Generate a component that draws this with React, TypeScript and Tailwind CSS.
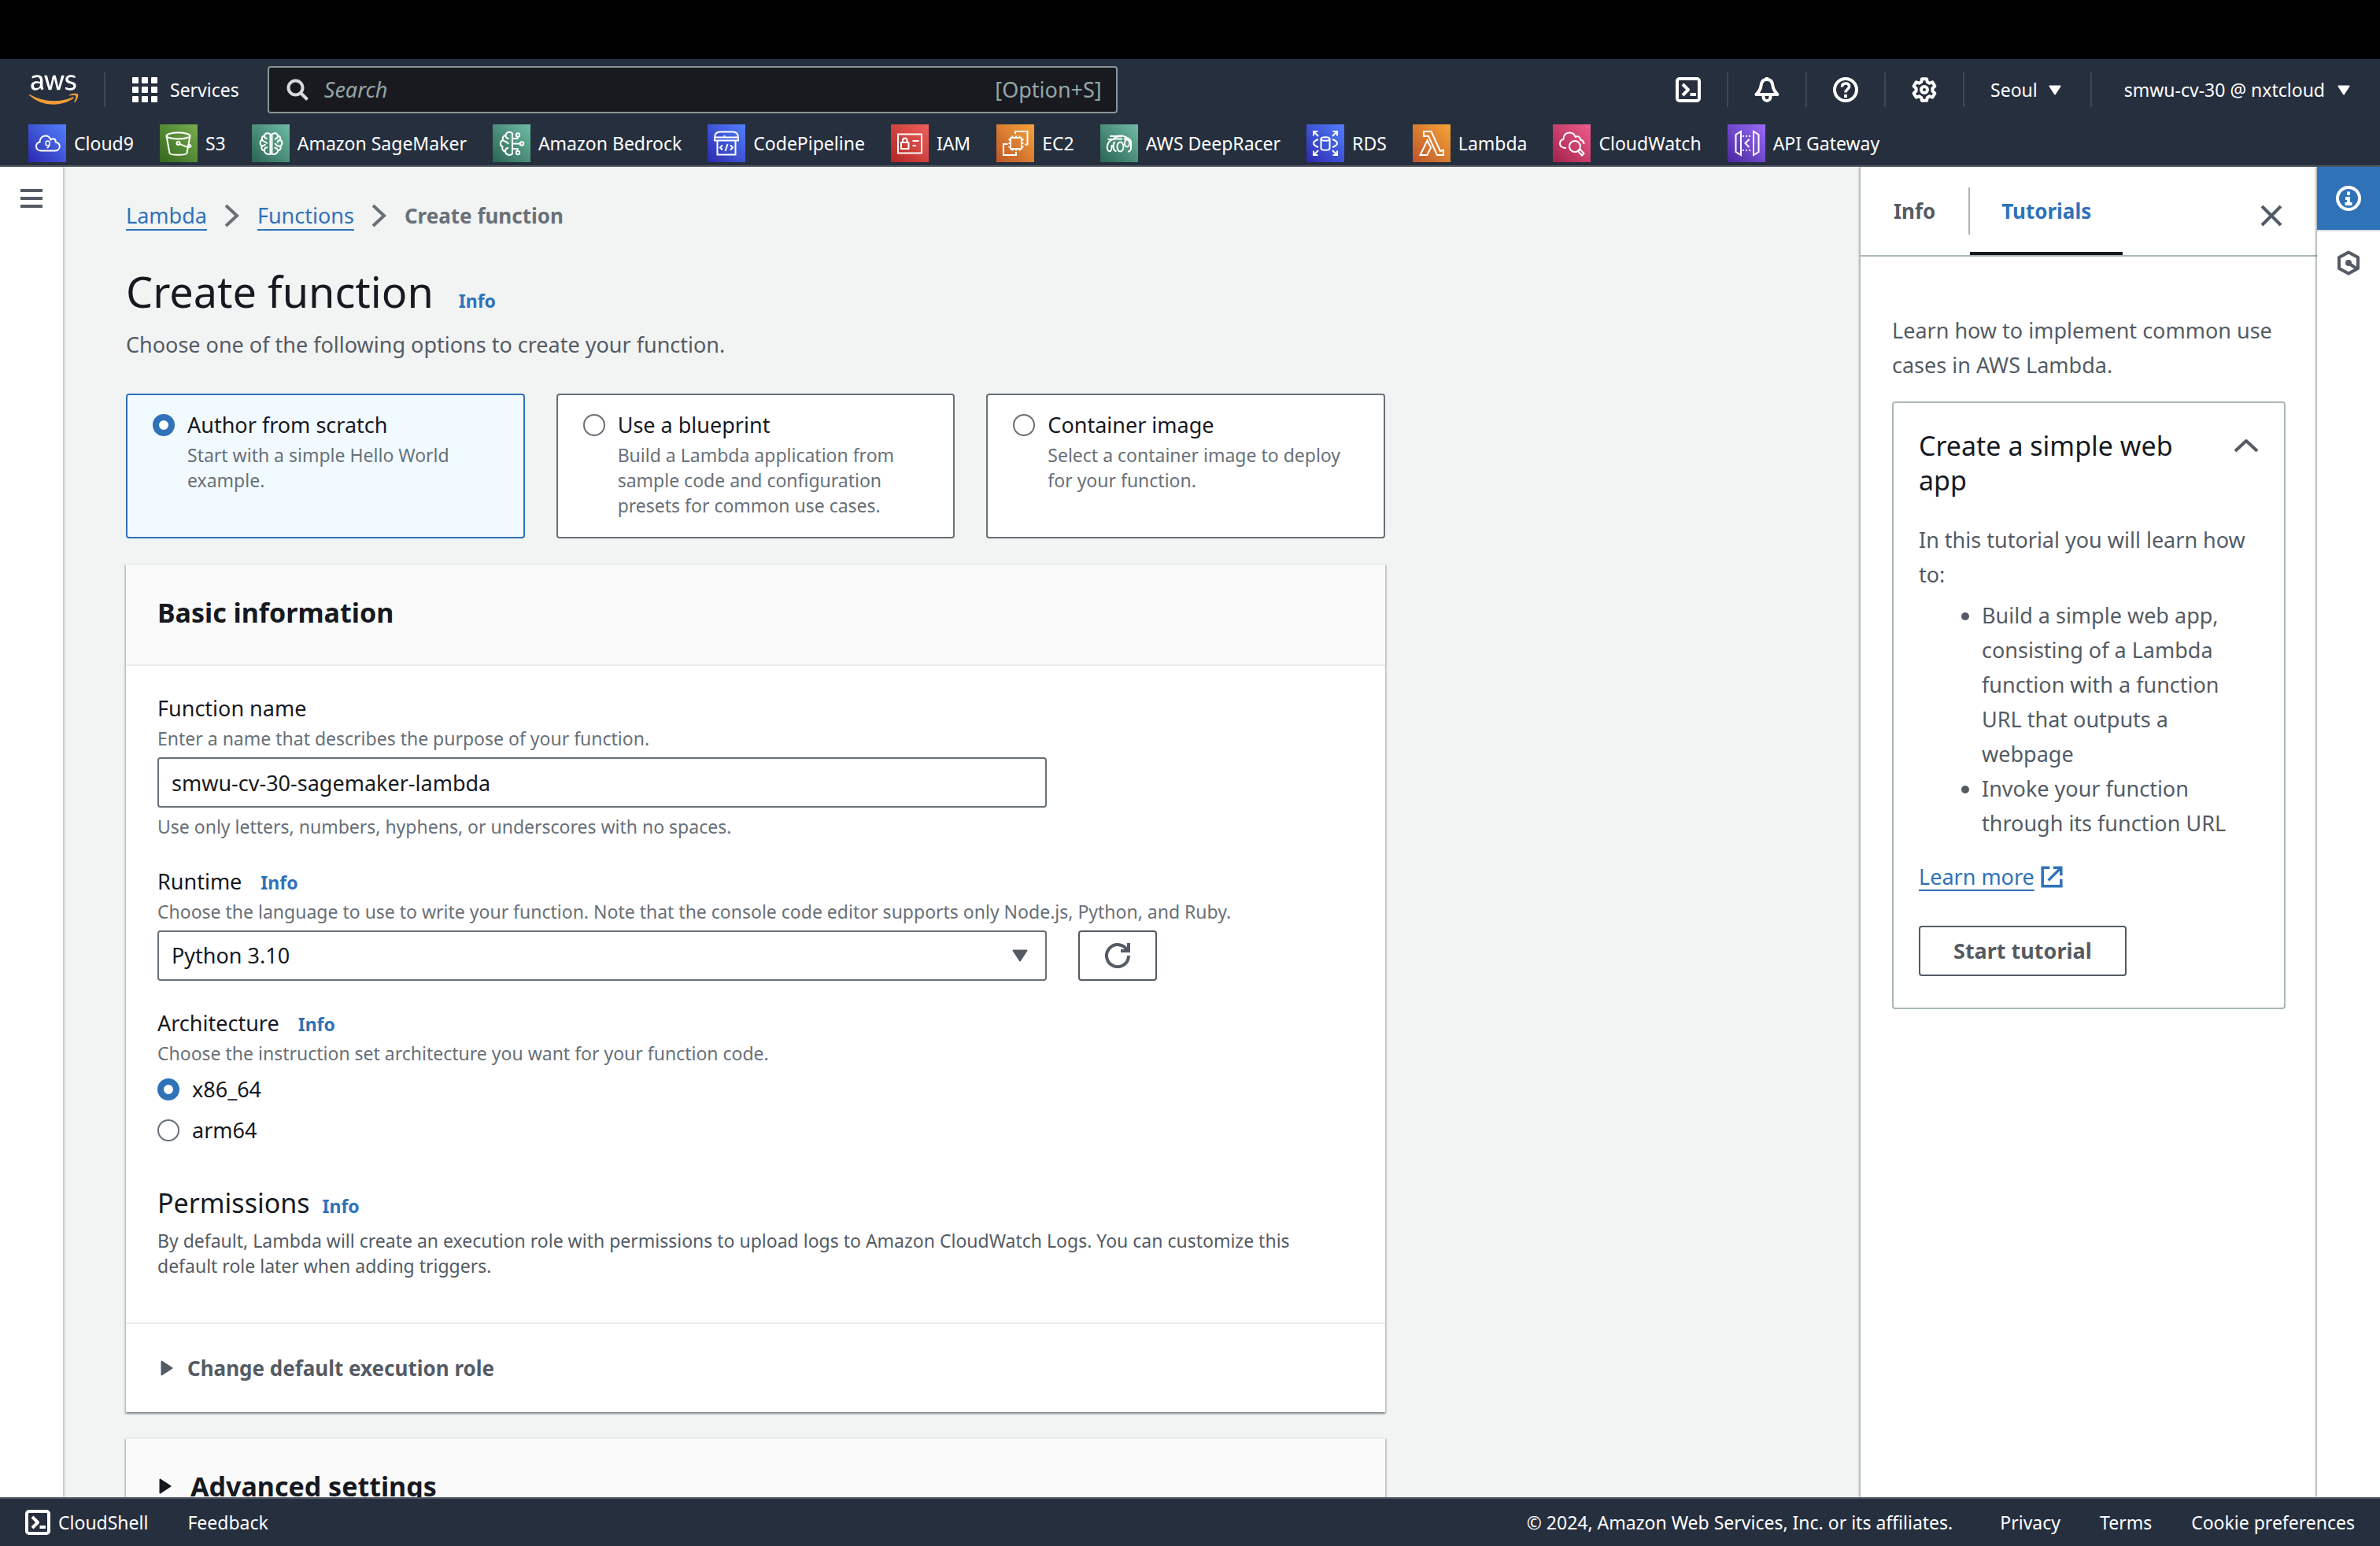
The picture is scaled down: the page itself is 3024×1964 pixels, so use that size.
import type { ReactNode } from "react";
import { FaAws } from "react-icons/fa";

type IconProps = { className?: string; children: ReactNode };

function Icon({ className = "size-8", children }: IconProps) {
  return (
    <svg
      viewBox="0 0 32 32"
      aria-hidden="true"
      fill="none"
      stroke="currentColor"
      strokeWidth={4}
      className={`shrink-0 ${className}`}
    >
      {children}
    </svg>
  );
}

const TerminalIcon = () => (
  <Icon>
    <rect x="2" y="2" width="28" height="28" rx="3" />
    <path d="M9 9l7 7-7 7" strokeLinejoin="round" />
    <path d="M18.5 22H26" strokeLinecap="butt" />
  </Icon>
);

const BellIcon = () => (
  <Icon>
    <path
      d="M16 3c-4.4 0-7 3-7.4 7.500C8.200 15 6.500 18 2.500 22h27c-4-4-5.700-7-6.100-11.500C23 6 20.400 3 16 3z"
      strokeLinejoin="round"
    />
    <path d="M16 0v4" />
    <path d="M11.500 22v3a4.500 5 0 0 0 9 0v-3" />
  </Icon>
);

const HelpIcon = () => (
  <Icon>
    <circle cx="16" cy="16" r="14" />
    <path d="M11.500 12.500C11.500 9.500 13.300 8 16 8s4.600 1.500 4.600 4.100c0 3.400-4.600 3.300-4.600 7.400" strokeWidth={3.600} />
    <path d="M16 22v4" />
  </Icon>
);

const GearIcon = () => (
  <Icon>
    <path
      d="M13 2.200h6l.8 3.900 2.800 1.600 3.800-1.300 3 5.200-3 2.600v3.600l3 2.600-3 5.200-3.800-1.300-2.800 1.600-.8 3.900h-6l-.8-3.900-2.800-1.600-3.800 1.300-3-5.200 3-2.600v-3.600l-3-2.600 3-5.200 3.800 1.300 2.800-1.600z"
      strokeLinejoin="round"
    />
    <circle cx="16" cy="16" r="4" />
  </Icon>
);

const CaretDown = ({ className = "" }: { className?: string }) => (
  <svg
    viewBox="0 0 20 16"
    aria-hidden="true"
    fill="currentColor"
    stroke="currentColor"
    strokeWidth={2}
    strokeLinejoin="round"
    className={`shrink-0 ${className}`}
  >
    <path d="M1.500 1.500h17L10 14.500z" />
  </svg>
);

const CaretRight = () => (
  <svg
    viewBox="0 0 16 20"
    aria-hidden="true"
    fill="currentColor"
    stroke="currentColor"
    strokeWidth={2}
    strokeLinejoin="round"
    className="h-5 w-4 shrink-0"
  >
    <path d="M1.500 1.500v17L14.500 10z" />
  </svg>
);

const Divider = () => <span className="h-11 w-0.5 shrink-0 bg-[#414750]" />;

const services: { name: string; tile: string; art: ReactNode }[] = [
  {
    name: "Cloud9",
    tile: "from-[#2e27ad] to-[#527fff]",
    art: (
      <>
        <path d="M16 33.500c-3.500 0-6-2.500-6-5.500s2-5 4.600-5.500c-.3-4.500 3-8 7-8 3.300 0 5.800 2 6.900 5 1-1 2-1.400 3.200-1.200 2 .3 3.200 2 3.100 4.200 3.200.8 5 2.900 5 5.600 0 3-2.500 5.400-6 5.400z" />
        <path d="M27 24a2.500 3 0 1 1-5 0a2.500 3 0 1 1 5 0c0 3-1.500 5.500-3.500 6" strokeWidth={1.500} />
      </>
    ),
  },
  {
    name: "S3",
    tile: "from-[#33681d] to-[#78ae4e]",
    art: (
      <>
        <ellipse cx="23.500" cy="14.500" rx="15" ry="4" />
        <path d="M8.500 14.500l4 22c1 3 21 3 22 0l4-22" />
        <circle cx="23.500" cy="24" r="2" />
        <path d="M25 24.500c7 4 13.500 5.500 14.500 3.500.3-1-1-2-3.500-3" />
      </>
    ),
  },
  {
    name: "Amazon SageMaker",
    tile: "from-[#2b6553] to-[#6fbda5]",
    art: (
      <>
        <path d="M23.500 12.500c-2.500-2.300-7-1.600-7.500 2-3 .3-3.800 2.800-2.800 5-3.200 1.500-3.600 6.300-.4 8-1.400 3 .3 5.500 3 5.800.3 3.500 3.800 5.500 7.700 4.500z" />
        <path d="M25.500 12.500c2.500-2.300 7-1.600 7.500 2 3 .3 3.800 2.800 2.800 5 3.200 1.500 3.600 6.300.4 8 1.400 3-.3 5.500-3 5.800-.3 3.500-3.800 5.500-7.700 4.500z" />
        <path d="M16 14.500c0 2 1.500 3.500 3.500 3.500M13 20c2 2.500 5.500 2 6.500 4.500M12.800 27.500c2.200 0 3.700-1 4.200-2.500M16 33.300c0-2.300 1.500-4 4-4M33 14.500c0 2.500-1.500 4-4 4M36 20c-2 .2-3.500 1.500-3.500 3.500M36 27.500c-3 .5-6-1-6.500-3.500M33 33.300c-.5-2.300-2-3.800-4.500-3.300" />
      </>
    ),
  },
  {
    name: "Amazon Bedrock",
    tile: "from-[#2b6553] to-[#6fbda5]",
    art: (
      <>
        <path d="M25 11.500c-3-3-8-2-8.500 2.500-3.500.3-4.500 3.500-3.300 6-4.200 1.500-4.500 6.500-.7 8.500-1 3.500.8 5.500 3.500 6 .7 4.500 6 5.500 9 3z" />
        <path d="M16.500 14c0 2.500 1.500 4 4 4M13 20c3 2.500 6 2 7 5M16 34.500c0-2.500 1.500-4.500 4-4.500" />
        <path d="M25 18h6.500v-2.500M25 24.500h9.500M25 31h6.500v2.500" />
        <circle cx="32" cy="13.500" r="2.200" />
        <circle cx="37" cy="24.500" r="2.200" />
        <circle cx="32" cy="36" r="2.200" />
      </>
    ),
  },
  {
    name: "CodePipeline",
    tile: "from-[#2e27ad] to-[#527fff]",
    art: (
      <>
        <path d="M9 17c0-5 3-7.500 7-7.500h16c4 0 7 2.500 7 7.500v3.500H9zM9 16.500h30M12.500 20.500v18h23v-18M17 16.500v1M21.500 14v2.500" />
        <path d="M19 26.500l-3 3 3 3M29 26.500l3 3-3 3M25.500 25l-3 9" />
      </>
    ),
  },
  {
    name: "IAM",
    tile: "from-[#b12423] to-[#f0605b]",
    art: (
      <>
        <rect x="9" y="12.500" width="30" height="24" />
        <rect x="13" y="23" width="9.500" height="8" />
        <path d="M15 23v-2.500c0-4 5.500-4 5.500 0V23M27.500 21h8M27.500 27h4.500" />
      </>
    ),
  },
  {
    name: "EC2",
    tile: "from-[#bd572a] to-[#f5a336]",
    art: (
      <>
        <rect x="18" y="17" width="14" height="14" />
        <path d="M20.500 14.500V17M25 14.500V17M29.500 14.500V17M20.500 31v2.500M25 31v2.500M29.500 31v2.500M15.500 19.500H18M15.500 24H18M15.500 28.500H18M32 19.500h2.500M32 24h2.500M32 28.500h2.500" />
        <path d="M24 12V9h15.500v16.500H36M14.500 25H9v14h16v-4" />
      </>
    ),
  },
  {
    name: "AWS DeepRacer",
    tile: "from-[#2b6553] to-[#6fbda5]",
    art: (
      <>
        <path d="M12 15h8c7-1.500 13 0 18 5M9.500 19h7c2.500-3 6-4 9.500-3.500M9 27c1-5 5-8 10-8.500h9M30 19c3-2.500 8-1.500 9 3v8c0 3-2 5-4 4.500" />
        <ellipse cx="25.500" cy="28.500" rx="4" ry="6" />
        <ellipse cx="34" cy="24" rx="3" ry="4.500" />
        <path d="M9 27c-1 4 1 8 3.500 7s2-5 2-8M18.500 22c-3 3-2.500 12 2 12" />
      </>
    ),
  },
  {
    name: "RDS",
    tile: "from-[#2e27ad] to-[#527fff]",
    art: (
      <>
        <ellipse cx="24" cy="18.500" rx="5.500" ry="2.300" />
        <path d="M18.500 18.500v12c0 3 11 3 11 0v-12" />
        <path d="M9 14.500V9h5.500M9 9l6 6M33.500 9H39v5.500M39 9l-6 6M9 33.500V39h5.500M9 39l6-6M33.500 39H39v-5.500M39 39l-6-6" />
        <path d="M15 19c-4 1.500-6 3-6 5s2 3.500 6 5M33 19c4 1.500 6 3 6 5s-2 3.500-6 5" />
      </>
    ),
  },
  {
    name: "Lambda",
    tile: "from-[#bd572a] to-[#f5a336]",
    art: (
      <>
        <path d="M14 9h9.500l11.500 25 4-1.300V39h-8L20 15h-6zM18.500 20.500L9.500 39h8.800l4.700-9.500z" />
      </>
    ),
  },
  {
    name: "CloudWatch",
    tile: "from-[#a3214d] to-[#f05d8c]",
    art: (
      <>
        <path d="M17 30c-5 0-8-2-8-5.500 0-3 2-5 4.500-5.500-.5-5 3-8.500 7.500-8.500 3.500 0 6.500 2 7.700 5.500 3-2 6.300 0 6.300 3.500 2.500.5 4.500 2.500 4.500 5.500" />
        <circle cx="28" cy="28" r="7" />
        <path d="M33 33l1.500-1.500 5 5.500-2.500 2.500-5-5.500z" />
      </>
    ),
  },
  {
    name: "API Gateway",
    tile: "from-[#4a289f] to-[#9c6afb]",
    art: (
      <>
        <path d="M17 9v30l-6.500-4V13zM33 9v30l6.500-4V13z" />
        <path d="M19 15h12M19 33h12" strokeDasharray="2 2" />
        <path d="M27.500 19l-5 5 5 5" />
      </>
    ),
  },
];

function TopNav() {
  return (
    <header className="shrink-0 border-b-2 border-[#545b64] bg-[#262f3e] pt-[9px] pb-1 text-[23px] leading-8 text-white">
      <div className="flex h-[60px] items-center pr-[38px] pl-9">
        <a href="#home" aria-label="AWS home" className="block">
          <FaAws fill="url(#aws-mark)" className="h-[50px] w-16" />
          <svg width="0" height="0" className="absolute" aria-hidden="true">
            <linearGradient id="aws-mark" gradientUnits="userSpaceOnUse" x1="0" y1="0" x2="0" y2="512">
              <stop offset=".56" stopColor="#fff" />
              <stop offset=".56" stopColor="#f09d38" />
            </linearGradient>
          </svg>
        </a>
        <div className="mr-[34px] ml-8 flex">
          <Divider />
        </div>
        <button type="button" className="flex items-center gap-4">
          <svg viewBox="0 0 32 32" aria-hidden="true" fill="currentColor" className="size-8">
            {[0, 12, 24].map((y) =>
              [0, 12, 24].map((x) => <rect key={`${x}-${y}`} x={x} y={y} width="8" height="8" rx="1" />),
            )}
          </svg>
          Services
        </button>
        <label className="ml-9 flex h-full w-[1080px] items-center gap-5 rounded border-2 border-[#879596] bg-[#191a1f] pr-[18px] pl-[22px] text-[27px] text-[#95a5a6]">
          <svg viewBox="0 0 28 28" aria-hidden="true" fill="none" stroke="#d5dbdb" strokeWidth={4} className="size-7 shrink-0">
            <circle cx="11.500" cy="11.500" r="9" />
            <path d="M18 18l8.500 8.500" />
          </svg>
          <input
            type="search"
            aria-label="Search"
            placeholder="Search"
            className="min-w-0 flex-1 bg-transparent italic outline-none placeholder:text-[#95a5a6]"
          />
          <span>[Option+S]</span>
        </label>
        <nav aria-label="Account" className="ml-auto flex items-center gap-[33px]">
          <button type="button" aria-label="CloudShell"><TerminalIcon /></button>
          <Divider />
          <button type="button" aria-label="Notifications"><BellIcon /></button>
          <Divider />
          <button type="button" aria-label="Help"><HelpIcon /></button>
          <Divider />
          <button type="button" aria-label="Settings"><GearIcon /></button>
          <Divider />
          <button type="button" className="flex items-center gap-3.5 pr-1">
            Seoul
            <CaretDown className="h-[13px] w-4" />
          </button>
          <Divider />
          <button type="button" className="flex items-center gap-4 pl-2">
            smwu-cv-30 @ nxtcloud
            <CaretDown className="h-[13px] w-4" />
          </button>
        </nav>
      </div>
      <nav aria-label="Favorites" className="mt-3.5 flex gap-[33px] pl-9">
        {services.map((s) => (
          <a key={s.name} href="#service" className="flex items-center gap-2.5">
            <span className={`size-12 shrink-0 bg-gradient-to-tr ${s.tile}`}>
              <svg viewBox="0 0 48 48" aria-hidden="true" fill="none" stroke="#fff" strokeWidth={2} className="size-12">
                {s.art}
              </svg>
            </span>
            {s.name}
          </a>
        ))}
      </nav>
    </header>
  );
}

const InfoLink = () => (
  <a href="#info" className="text-[23px] leading-8 font-bold text-[#2f72b8]">
    Info
  </a>
);

const radioClass =
  "m-0 size-7 shrink-0 appearance-none rounded-full border-2 border-[#687078] bg-white checked:border-8 checked:border-[#2f72b8]";

const Crumb = () => (
  <svg viewBox="0 0 20 30" aria-hidden="true" fill="none" stroke="#687078" strokeWidth={4} className="h-[30px] w-5">
    <path d="M2 2l14 13L2 28" />
  </svg>
);

const options = [
  { title: "Author from scratch", text: "Start with a simple Hello World example." },
  {
    title: "Use a blueprint",
    text: "Build a Lambda application from sample code and configuration presets for common use cases.",
  },
  { title: "Container image", text: "Select a container image to deploy for your function." },
];

const cardClass =
  "border-t-2 border-[#eaeded] bg-white shadow-[0_2px_2px_rgba(0,28,36,0.3),2px_2px_2px_rgba(0,28,36,0.15),-2px_2px_2px_rgba(0,28,36,0.15)]";

const hintClass = "text-[23px] leading-8 text-[#687078]";
const fieldClass =
  "h-16 w-full appearance-none rounded border-2 border-[#687078] bg-white px-4 text-[27px] text-[#16191f]";

function CreateFunction() {
  return (
    <main className="min-w-0 flex-1 overflow-hidden px-20 pt-10">
      <div className="max-w-[1600px]">
        <nav aria-label="Breadcrumb" className="flex items-center gap-[22px]">
          <a href="#lambda" className="text-[#2f72b8] underline decoration-2 underline-offset-[7px]">Lambda</a>
          <Crumb />
          <a href="#functions" className="text-[#2f72b8] underline decoration-2 underline-offset-[7px]">Functions</a>
          <Crumb />
          <span className="text-[26px] font-bold text-[#687078]">Create function</span>
        </nav>
        <div className="mt-[38px] flex items-baseline gap-8">
          <h1 className="text-[54px] leading-[72px] text-[#16191f]">Create function</h1>
          <InfoLink />
        </div>
        <p className="mt-2.5">Choose one of the following options to create your function.</p>

        <div className="mt-10 grid grid-cols-3 gap-10">
          {options.map((o, i) => (
            <label
              key={o.title}
              className="flex gap-4 rounded border-2 border-[#687078] bg-white px-8 pt-4 pb-6 has-checked:border-[#2f72b8] has-checked:bg-[#f1faff]"
            >
              <input type="radio" name="method" defaultChecked={i === 0} className={`mt-2 ${radioClass}`} />
              <span className="flex flex-col">
                <span className="text-[#16191f]">{o.title}</span>
                <span className={hintClass}>{o.text}</span>
              </span>
            </label>
          ))}
        </div>

        <section className={`mt-8 ${cardClass}`}>
          <header className="border-b-2 border-[#eaeded] bg-[#fafafa] px-10 pt-[38px] pb-11">
            <h2 className="text-[34px] leading-[44px] font-bold text-[#16191f]">Basic information</h2>
          </header>
          <form className="px-10 pt-8 pb-14">
            <label htmlFor="fn-name" className="block text-[#16191f]">Function name</label>
            <p className={hintClass}>Enter a name that describes the purpose of your function.</p>
            <div className="mt-2 max-w-[1130px]">
              <input id="fn-name" type="text" defaultValue="smwu-cv-30-sagemaker-lambda" className={fieldClass} />
            </div>
            <p className={`mt-2 ${hintClass}`}>Use only letters, numbers, hyphens, or underscores with no spaces.</p>

            <div className="mt-8 flex items-baseline gap-6">
              <label htmlFor="runtime" className="text-[#16191f]">Runtime</label>
              <InfoLink />
            </div>
            <p className={hintClass}>
              Choose the language to use to write your function. Note that the console code editor supports only Node.js, Python, and Ruby.
            </p>
            <div className="mt-2 flex gap-10">
              <div className="relative w-full max-w-[1130px]">
                <select id="runtime" defaultValue="Python 3.10" className={fieldClass}>
                  <option>Python 3.10</option>
                </select>
                <CaretDown className="pointer-events-none absolute top-6 right-6 h-4 w-5 text-[#545b64]" />
              </div>
              <button
                type="button"
                aria-label="Refresh runtimes"
                className="flex h-16 w-[100px] items-center justify-center rounded border-2 border-[#545b64] bg-white text-[#545b64]"
              >
                <Icon>
                  <path d="M20 10h10V0" />
                  <path d="M30 16a14 14 0 1 1-1.400-6" />
                </Icon>
              </button>
            </div>

            <fieldset className="mt-8">
              <legend className="flex items-baseline gap-6 text-[#16191f]">
                Architecture
                <InfoLink />
              </legend>
              <p className={hintClass}>Choose the instruction set architecture you want for your function code.</p>
              {["x86_64", "arm64"].map((a, i) => (
                <label key={a} className="mt-2 flex items-center gap-4 text-[#16191f]">
                  <input type="radio" name="arch" defaultChecked={i === 0} className={radioClass} />
                  {a}
                </label>
              ))}
            </fieldset>

            <div className="mt-12 flex items-baseline gap-4">
              <h3 className="text-[34px] leading-[44px] text-[#16191f]">Permissions</h3>
              <InfoLink />
            </div>
            <p className="mt-2.5 text-[23px] leading-8">
              By default, Lambda will create an execution role with permissions to upload logs to Amazon CloudWatch Logs. You can customize this default role later when adding triggers.
            </p>
          </form>
          <button type="button" className="flex w-full items-center gap-[18px] border-t-2 border-[#eaeded] px-11 py-[34px] text-[26px] font-bold">
            <CaretRight />
            Change default execution role
          </button>
        </section>

        <section className={`mt-8 ${cardClass}`}>
          <button type="button" className="flex w-full items-center gap-6 bg-[#fafafa] px-[42px] pt-[38px] pb-11 text-[34px] leading-[44px] font-bold text-[#16191f]">
            <CaretRight />
            Advanced settings
          </button>
        </section>
      </div>
    </main>
  );
}

function ToolsPanel() {
  return (
    <aside className="w-[580px] shrink-0 bg-white shadow-[-2px_0_2px_rgba(0,28,36,0.3)]">
      <div className="flex h-[114px] items-center border-b-2 border-[#aab7b8] text-[26px] font-bold">
        <button type="button" className="px-[42px]">Info</button>
        <span className="h-[60px] w-0.5 bg-[#aab7b8]" />
        <button type="button" className="h-full border-y-4 border-t-transparent border-b-[#16191f] px-10 text-[#2f72b8]">
          Tutorials
        </button>
        <button type="button" aria-label="Close panel" className="mr-11 ml-auto pt-3">
          <svg viewBox="0 0 28 28" fill="none" stroke="currentColor" strokeWidth={4} className="size-7">
            <path d="M2 2l24 24M26 2L2 26" />
          </svg>
        </button>
      </div>
      <div className="px-10 pt-[72px]">
        <p>Learn how to implement common use cases in AWS Lambda.</p>
        <section className="mt-6 rounded border-2 border-[#aab7b8] px-8 pt-8 pb-10">
          <div className="flex items-start gap-10">
            <h2 className="flex-1 text-[34px] leading-[44px] text-[#16191f]">Create a simple web app</h2>
            <button type="button" aria-label="Collapse tutorial" className="pt-3">
              <svg viewBox="0 0 32 20" fill="none" stroke="currentColor" strokeWidth={4} className="h-5 w-8">
                <path d="M2 17L16 4l14 13" strokeLinejoin="round" />
              </svg>
            </button>
          </div>
          <p className="mt-8">In this tutorial you will learn how to:</p>
          <ul className="mt-2 list-disc pl-20">
            <li>Build a simple web app, consisting of a Lambda function with a function URL that outputs a webpage</li>
            <li>Invoke your function through its function URL</li>
          </ul>
          <a href="#learn" className="mt-6 flex items-center gap-2 text-[#2f72b8]">
            <span className="underline decoration-2 underline-offset-[6px]">Learn more</span>
            <Icon className="size-7">
              <path d="M18 2.500h11.500V14M11 21L29 3" />
              <path d="M13 2.500H2.500v27h27V19" />
            </Icon>
          </a>
          <button type="button" className="mt-10 h-16 rounded border-2 border-[#545b64] px-[42px] text-[27px] font-bold">
            Start tutorial
          </button>
        </section>
      </div>
    </aside>
  );
}

function ToolsRail() {
  return (
    <div className="flex w-20 shrink-0 flex-col items-center bg-white shadow-[-2px_0_2px_rgba(0,28,36,0.3)]">
      <button
        type="button"
        aria-label="Open info panel"
        className="flex h-[82px] w-full items-center justify-center border-b-2 border-[#d5dbdb] bg-[#2f72b8] text-white"
      >
        <Icon>
          <circle cx="16" cy="16" r="14" />
          <path d="M16 7.500V12M12 16h4v8M11.500 23h9" />
        </Icon>
      </button>
      <button type="button" aria-label="Open tutorials panel" className="flex h-20 w-full items-center justify-center">
        <Icon>
          <path d="M16 2.500l12 6.500v14l-12 6.500L4 23V9z" strokeLinejoin="round" />
          <circle cx="16" cy="16" r="4" fill="currentColor" stroke="none" />
          <path d="M17 17l9 6" />
        </Icon>
      </button>
    </div>
  );
}

function Footer() {
  return (
    <footer className="flex h-[62px] shrink-0 items-center gap-[50px] border-t-2 border-[#545b64] bg-[#262f3e] px-8 text-[23px] leading-8 text-white">
      <button type="button" className="flex items-center gap-2.5">
        <TerminalIcon />
        CloudShell
      </button>
      <button type="button">Feedback</button>
      <span className="mr-2.5 ml-auto">© 2024, Amazon Web Services, Inc. or its affiliates.</span>
      <a href="#privacy">Privacy</a>
      <a href="#terms">Terms</a>
      <a href="#cookies">Cookie preferences</a>
    </footer>
  );
}

export default function App() {
  return (
    <div className="flex h-screen flex-col overflow-hidden bg-[#f2f3f3] font-['Noto_Sans','Open_Sans',sans-serif] text-[27px] leading-[44px] text-[#545b64]">
      <div className="h-[75px] shrink-0 bg-black" />
      <TopNav />
      <div className="flex min-h-0 flex-1">
        <div className="w-20 shrink-0 bg-white shadow-[2px_0_2px_rgba(0,28,36,0.2)]">
          <button type="button" aria-label="Open navigation" className="mt-7 ml-[26px] flex w-7 flex-col gap-1.5">
            <span className="h-1 bg-[#545b64]" />
            <span className="h-1 bg-[#545b64]" />
            <span className="h-1 bg-[#545b64]" />
          </button>
        </div>
        <CreateFunction />
        <ToolsPanel />
        <ToolsRail />
      </div>
      <Footer />
    </div>
  );
}
